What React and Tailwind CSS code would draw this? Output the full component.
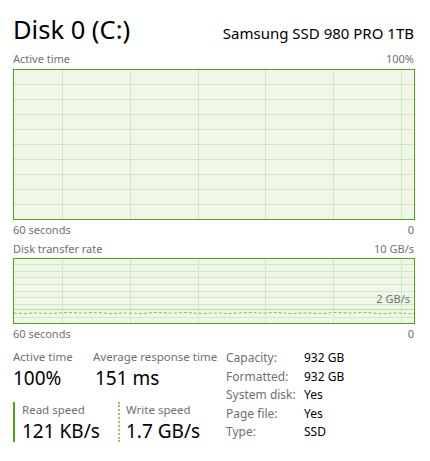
import React from "react";

const font = { fontFamily: '"Segoe UI", "Noto Sans", "Open Sans", sans-serif' };

function Grid({ w, h, hs, vs, extra }) {
  return (
    <svg width={w} height={h} viewBox={`0 0 ${w} ${h}`} className="block">
      <rect x="0" y="0" width={w} height={h} fill="#f0f7e9" />
      {hs.map((y, i) => (
        <line key={"h" + i} x1="0" x2={w} y1={y} y2={y} stroke="#d1e9c3" strokeWidth="1" />
      ))}
      {vs.map((x, i) => (
        <line key={"v" + i} x1={x} x2={x} y1="0" y2={h} stroke="#d1e9c3" strokeWidth="1" />
      ))}
      {extra}
    </svg>
  );
}

const vLines = [48.5, 116.5, 184.5, 251.5, 319.5, 387.5];

function dashedPath() {
  let pts = [];
  for (let x = 0; x <= 400; x += 4) {
    const y = 54 + (Math.sin(x * 0.21) + Math.sin(x * 0.07)) * 0.35;
    pts.push(`${x},${y.toFixed(2)}`);
  }
  return pts.join(" ");
}

export default function App() {
  const h1 = [14.5, 29.5, 44.5, 59.5, 74.5, 89.5, 104.5, 119.5, 134.5];
  const h2 = [5.5, 12.5, 18.5, 25.5, 32.5, 38.5, 45.5, 58.5];
  return (
    <div className="w-[430px] h-[461px] bg-white pl-[13px] pr-[16px] text-black overflow-hidden" style={font}>
      <div className="flex justify-between items-end pt-[10px] h-[46px]">
        <div className="text-[25.5px] leading-[33px]">Disk 0 (C:)</div>
        <div className="text-[15px] leading-[20px] mb-[3px]">Samsung SSD 980 PRO 1TB</div>
      </div>
      <div className="flex justify-between text-[11px] leading-[22px] h-[22px] text-[#707070] mt-[2px]">
        <span>Active time</span>
        <span>100%</span>
      </div>
      <div className="border border-[#4ca60d] h-[151px] w-[402px] mt-[-1px]">
        <Grid w={400} h={149} hs={h1} vs={vLines} />
      </div>
      <div className="flex justify-between text-[11px] leading-[19px] text-[#707070]">
        <span>60 seconds</span>
        <span>0</span>
      </div>
      <div className="flex justify-between text-[11px] leading-[19px] text-[#707070]">
        <span>Disk transfer rate</span>
        <span>10 GB/s</span>
      </div>
      <div className="relative border border-[#4ca60d] h-[66px] w-[402px]">
        <Grid
          w={400}
          h={64}
          hs={h2}
          vs={vLines}
          extra={
            <>
              <line x1="0" x2="400" y1="50.5" y2="50.5" stroke="#b9dca2" strokeWidth="1" />
              <polyline points={dashedPath()} fill="none" stroke="#86cc3c" strokeWidth="1.1" strokeDasharray="3 2" />
            </>
          }
        />
        <span className="absolute right-[4px] top-[33px] text-[11px] leading-[14px] text-[#707070]">2 GB/s</span>
      </div>
      <div className="flex justify-between text-[11px] leading-[19px] text-[#707070]">
        <span>60 seconds</span>
        <span>0</span>
      </div>
      <div className="flex mt-[6px]">
        <div className="w-[213px] flex flex-col">
          <div className="flex">
            <div className="flex flex-col w-[80px]">
              <span className="text-[11.5px] leading-[16px] text-[#707070]">Active time</span>
              <span className="text-[19px] leading-[26px]">100%</span>
            </div>
            <div className="flex flex-col">
              <span className="text-[11.5px] leading-[16px] text-[#707070]">Average response time</span>
              <span className="text-[19px] leading-[26px] pl-[2px]">151 ms</span>
            </div>
          </div>
          <div className="flex mt-[11px]">
            <div className="flex w-[105px] h-[40px]">
              <div className="w-[2px] h-full bg-[#4ca60d]" />
              <div className="flex flex-col pl-[7px]">
                <span className="text-[11.5px] leading-[16px] text-[#707070]">Read speed</span>
                <span className="text-[19px] leading-[26px]">121 KB/s</span>
              </div>
            </div>
            <div className="flex h-[40px]">
              <div className="w-[2px] h-full border-l-2 border-dotted border-[#8fd14a]" />
              <div className="flex flex-col pl-[6px]">
                <span className="text-[11.5px] leading-[16px] text-[#707070]">Write speed</span>
                <span className="text-[19px] leading-[26px]">1.7 GB/s</span>
              </div>
            </div>
          </div>
        </div>
        <div className="grid grid-cols-[78px_auto] text-[12px] leading-[18px]">
          <span className="text-[#707070]">Capacity:</span>
          <span>932 GB</span>
          <span className="text-[#707070]">Formatted:</span>
          <span>932 GB</span>
          <span className="text-[#707070]">System disk:</span>
          <span>Yes</span>
          <span className="text-[#707070]">Page file:</span>
          <span>Yes</span>
          <span className="text-[#707070]">Type:</span>
          <span>SSD</span>
        </div>
      </div>
    </div>
  );
}
